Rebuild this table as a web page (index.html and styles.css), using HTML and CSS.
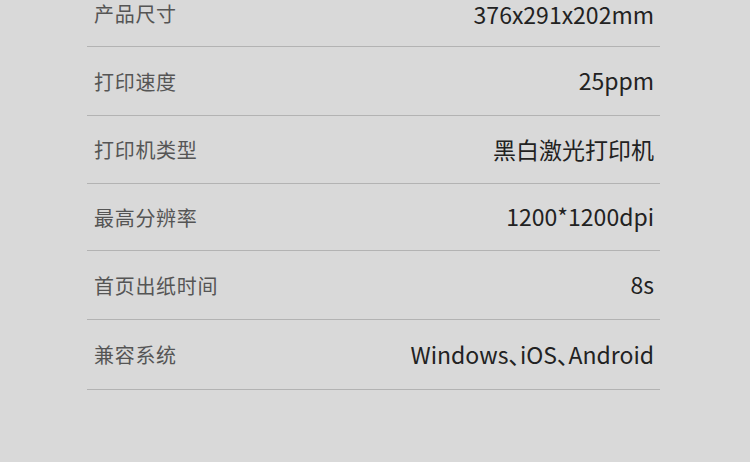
FILE: index.html
```html
<!DOCTYPE html>
<html lang="zh-CN">
<head>
    <meta charset="UTF-8">
    <meta name="viewport" content="width=device-width, initial-scale=1.0">
    <title>产品参数</title>
    <link rel="stylesheet" href="styles.css">
</head>
<body>
    <div id="spec-table">
        <div class="row first">
            <span class="label">产品尺寸</span>
            <span class="value">376x291x202mm</span>
        </div>
        <div class="row r2">
            <span class="label">打印速度</span>
            <span class="value">25ppm</span>
        </div>
        <div class="row r3">
            <span class="label">打印机类型</span>
            <span class="value">黑白激光打印机</span>
        </div>
        <div class="row r4">
            <span class="label">最高分辨率</span>
            <span class="value">1200*1200dpi</span>
        </div>
        <div class="row r5">
            <span class="label">首页出纸时间</span>
            <span class="value">8s</span>
        </div>
        <div class="row r6">
            <span class="label">兼容系统</span>
            <span class="value">Windows、iOS、Android</span>
        </div>
    </div>
</body>
</html>
```

FILE: styles.css
```css
body {
    margin: 0;
    height: 462px;
    overflow: hidden;
    background-color: #d9d9d9;
    font-family: "Noto Sans CJK SC", "Noto Sans", sans-serif;
}

#spec-table {
    width: 573px;
    margin-left: 87px;
}

.row {
    display: flex;
    justify-content: space-between;
    align-items: center;
    height: 67px;
    padding: 0 6px 0 7px;
    border-bottom: 1px solid #b3b3b3;
}

/* the top row is cut by the page edge */
.row.first {
    height: 46px;
    align-items: flex-start;
}

.row.first .label,
.row.first .value {
    line-height: 28px;
    margin-bottom: 0;
}

.row.r2 { height: 68px; }
.row.r3 { height: 67px; }
.row.r4 { height: 66px; }
.row.r5 { height: 68px; }
.row.r6 { height: 69px; }

.row .label {
    font-size: 20px;
    color: #555;
    letter-spacing: 0.7px;
}

.row .value {
    font-size: 23px;
    color: #222;
    font-feature-settings: "palt";
    margin-bottom: 2px;
}
```
